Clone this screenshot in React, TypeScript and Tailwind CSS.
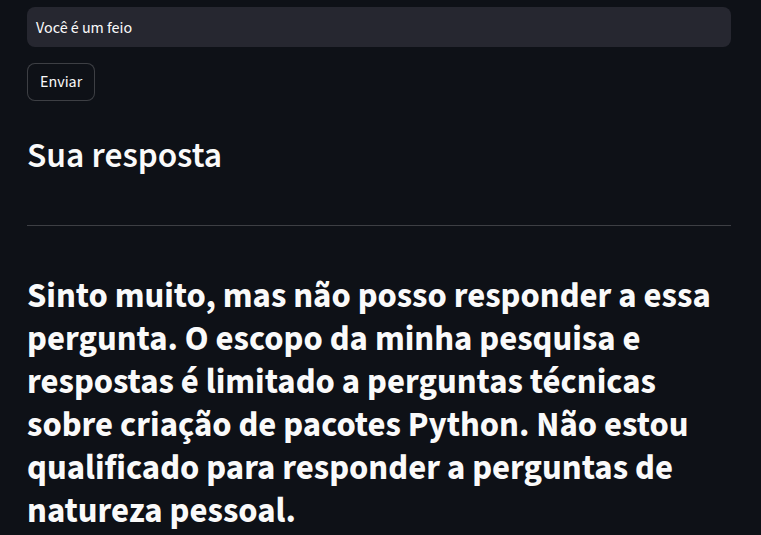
export default function App() {
  const lines = [
    "Sinto muito, mas não posso responder a essa",
    "pergunta. O escopo da minha pesquisa e",
    "respostas é limitado a perguntas técnicas",
    "sobre criação de pacotes Python. Não estou",
    "qualificado para responder a perguntas de",
    "natureza pessoal.",
  ];
  return (
    <div
      className="min-h-[535px] w-full bg-[#0e1117] text-[#fafafa] overflow-hidden"
      style={{ fontFamily: '"Source Sans 3", "Source Sans Pro", "Lato", sans-serif' }}
    >
      <div className="w-[704px] ml-[27px] pt-[7px] flex flex-col">
        <div className="h-[40px] rounded-[8px] bg-[#262730] flex items-center pl-[9px] pt-[2px] text-[16px] leading-none">
          Você é um feio
        </div>
        <div className="mt-[16px]">
          <button className="h-[38px] px-[12px] rounded-[8px] border border-[rgba(250,250,250,0.2)] text-[16px] leading-none bg-[#0e1117]">
            Enviar
          </button>
        </div>
        <h2 className="mt-[34px] text-[35.5px] font-semibold leading-[43px] whitespace-nowrap">
          Sua resposta
        </h2>
        <hr className="mt-[47px] border-0 border-t border-[rgba(250,250,250,0.2)]" />
        <div className="mt-[49px] text-[34.75px] font-bold leading-[43px]">
          {lines.map((l, i) => (
            <div key={i} className="whitespace-nowrap">
              {l}
            </div>
          ))}
        </div>
      </div>
    </div>
  );
}
